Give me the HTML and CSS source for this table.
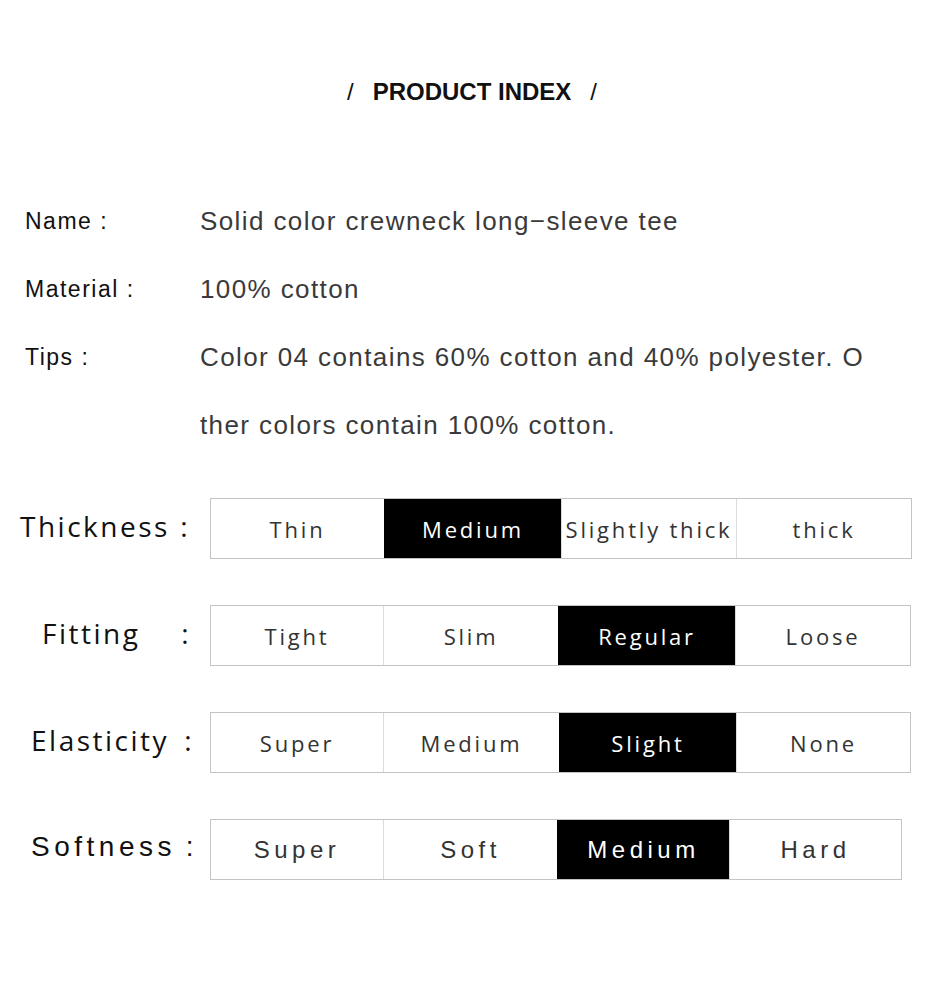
FILE: index.html
```html
<!DOCTYPE html>
<html lang="en">
<head>
<meta charset="utf-8">
<title>Product Index</title>
<link rel="stylesheet" href="styles.css">
</head>
<body>
<div class="page">
  <h1 class="title"><span class="slash">/</span><span class="title-text">PRODUCT INDEX</span><span class="slash">/</span></h1>

  <div class="info">
    <div class="info-row"><div class="info-label">Name :</div><div class="info-value">Solid color crewneck long−sleeve tee</div></div>
    <div class="info-row"><div class="info-label">Material :</div><div class="info-value">100% cotton</div></div>
    <div class="info-row"><div class="info-label">Tips :</div><div class="info-value">Color 04 contains 60% cotton and 40% polyester. O<br>ther colors contain 100% cotton.</div></div>
  </div>

  <div class="specs">
    <div class="spec-row">
      <div class="spec-label spec-label--thick"><span>Thickness</span><span class="colon">:</span></div>
      <div class="scale scale--wide">
        <div class="cell">Thin</div>
        <div class="cell cell--on">Medium</div>
        <div class="cell">Slightly thick</div>
        <div class="cell">thick</div>
      </div>
    </div>
    <div class="spec-row">
      <div class="spec-label spec-label--fit"><span>Fitting</span><span class="colon">:</span></div>
      <div class="scale scale--fit">
        <div class="cell">Tight</div>
        <div class="cell">Slim</div>
        <div class="cell cell--on">Regular</div>
        <div class="cell">Loose</div>
      </div>
    </div>
    <div class="spec-row">
      <div class="spec-label spec-label--elas"><span>Elasticity</span><span class="colon">:</span></div>
      <div class="scale scale--elas">
        <div class="cell">Super</div>
        <div class="cell">Medium</div>
        <div class="cell cell--on">Slight</div>
        <div class="cell">None</div>
      </div>
    </div>
    <div class="spec-row spec-row--arial">
      <div class="spec-label spec-label--soft"><span>Softness</span><span class="colon">:</span></div>
      <div class="scale scale--soft">
        <div class="cell">Super</div>
        <div class="cell">Soft</div>
        <div class="cell cell--on">Medium</div>
        <div class="cell">Hard</div>
      </div>
    </div>
  </div>
</div>
</body>
</html>
```
FILE: styles.css
```css
* { box-sizing: border-box; }
html, body { margin: 0; padding: 0; background: #fff; }
body { font-family: "Liberation Sans", Arial, sans-serif; color: #111; }

.page { width: 930px; padding-top: 77px; }

.title {
  margin: 0;
  height: 30px;
  line-height: 30px;
  display: flex;
  justify-content: center;
  padding-left: 14px;
  font-size: 24px;
  font-weight: bold;
  color: #111;
}
.slash { font-weight: normal; }
.title-text { margin: 0 19px; }

.info { margin-top: 80px; }
.info-row {
  display: grid;
  grid-template-columns: 175px 1fr;
  padding-left: 25px;
  line-height: 68px;
}
.info-label { font-size: 23px; color: #111; letter-spacing: 1.5px; }
.info-value { font-size: 26px; color: #3a3a3a; letter-spacing: 1.4px; }

.specs {
  margin-top: 39px;
  display: flex;
  flex-direction: column;
  gap: 46px;
}
.spec-row { display: flex; align-items: center; height: 61px; }
.spec-label {
  width: 210px;
  display: flex;
  font-family: "Open Sans", sans-serif;
  font-size: 28px;
  letter-spacing: 2.5px;
  color: #111;
  margin-top: -6px;
}
.colon { margin-left: auto; }
.spec-label--thick { padding-left: 20px; padding-right: 20px; }
.spec-label--fit { padding-left: 42px; padding-right: 19px; }
.spec-label--elas { padding-left: 31px; padding-right: 16px; }
.spec-label--soft { padding-left: 31px; padding-right: 12px; }

.scale {
  display: grid;
  height: 61px;
  border: 1px solid #c4c4c4;
}
.scale--wide { grid-template-columns: 173px 177px 175px 175px; }
.scale--fit { grid-template-columns: 172px 175px 177px 175px; }
.scale--elas { grid-template-columns: 172px 176px 177px 174px; }
.scale--soft { grid-template-columns: 172px 174px 172px 172px; }

.cell {
  display: flex;
  align-items: center;
  justify-content: center;
  border-left: 1px solid #dcdcdc;
  font-family: "Open Sans", sans-serif;
  font-size: 22px;
  letter-spacing: 2.8px;
  color: #333;
}
.cell:first-child { border-left: none; }
.cell--on { background: #000; color: #fff; border-left-color: #000; }

.spec-row--arial .spec-label {
  font-family: "Liberation Sans", Arial, sans-serif;
  letter-spacing: 4.5px;
}
.spec-row--arial .cell {
  font-family: "Liberation Sans", Arial, sans-serif;
  font-size: 24px;
  letter-spacing: 4.5px;
}
```
